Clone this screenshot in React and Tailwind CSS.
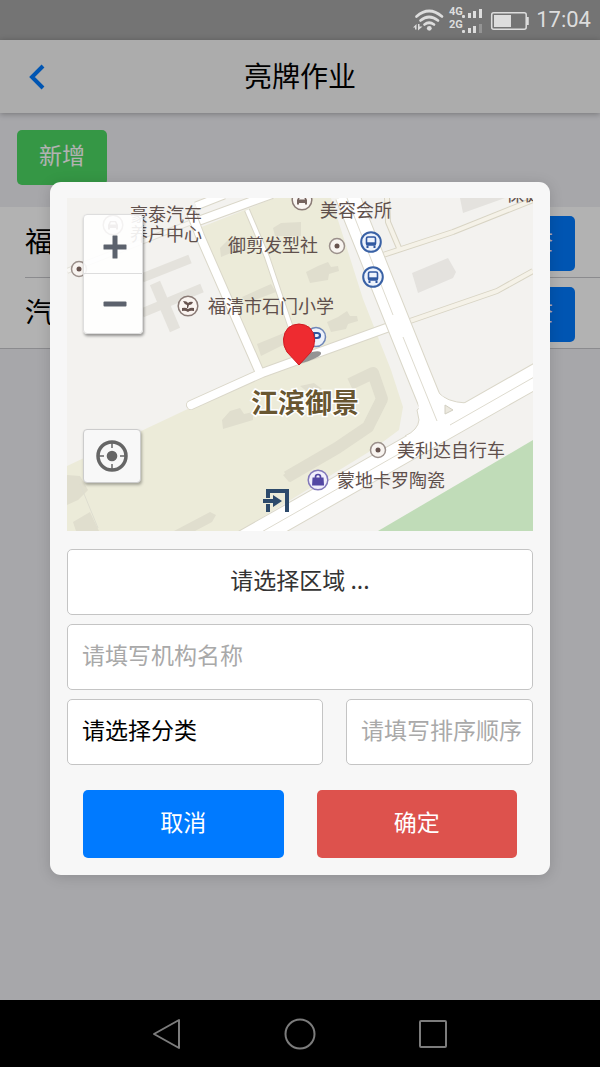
import React from "react";

const rows = ["福清", "汽车"];

function StatusBar() {
  return (
    <div className="flex h-10 items-center justify-end bg-[#747474] pr-[9px] text-[#dddddd]">
      <svg viewBox="412 0 120 40" className="h-10 w-[120px]" fill="none" stroke="#dddddd" aria-hidden="true">
        <path d="M416.500 16.500Q429 5.500 442 16.500M420.500 20.500Q429 13.500 438 20.500M424.500 24.500Q429 21 434 24.500" strokeWidth="2.700" strokeLinecap="round" />
        <circle cx="429.300" cy="28.300" r="2.400" fill="#dddddd" stroke="none" />
        <path d="M413 27.500L416.500 24V29.500H415V27.500ZM418 24H419.500V26.500H422.500L418 30.500Z" fill="#dddddd" stroke="none" />
        <g fill="#dddddd" stroke="none" fontFamily="Roboto, sans-serif" fontSize="11" fontWeight="700">
          <text x="449" y="15">4G</text>
          <text x="449" y="28">2G</text>
          <rect x="462" y="15" width="3" height="3" rx="1" />
          <rect x="468" y="13" width="3" height="5" />
          <rect x="473" y="11" width="3" height="7" />
          <rect x="479" y="9" width="3" height="9" />
          <rect x="462" y="30" width="3" height="3" rx="1" />
          <rect x="468" y="28" width="3" height="5" />
          <rect x="473" y="26" width="3" height="7" />
          <rect x="479" y="24" width="3" height="9" opacity="0.300" />
          <rect x="494" y="15" width="17" height="12" />
        </g>
        <rect x="491.700" y="12.700" width="34.500" height="16.500" rx="2" strokeWidth="1.500" />
        <path d="M527.500 17V25" strokeWidth="2.500" />
      </svg>
      <time className="ml-1 font-[Roboto,sans-serif] text-[22px] leading-10">17:04</time>
    </div>
  );
}

function Dot({ x, y }) {
  return (
    <g>
      <circle cx={x} cy={y} r="7.500" fill="#f8f4f0" stroke="#9b908b" strokeWidth="1.500" />
      <circle cx={x} cy={y} r="2.500" fill="#67534e" />
    </g>
  );
}

function Bus({ x, y }) {
  return (
    <g transform={`translate(${x} ${y})`}>
      <circle r="9.800" fill="#eef3fc" stroke="#3961a5" strokeWidth="2" />
      <rect x="-4.500" y="-5" width="9" height="8" rx="1.500" fill="none" stroke="#2f57a0" strokeWidth="1.600" />
      <path d="M-4 1.600H4" stroke="#2f57a0" strokeWidth="2.600" />
      <path d="M-3.500 3.500V6M3.500 3.500V6" stroke="#2f57a0" strokeWidth="2" />
    </g>
  );
}

function Car({ x, y }) {
  return (
    <g transform={`translate(${x} ${y})`}>
      <circle r="9.800" fill="#faf6f3" stroke="#8a7b76" strokeWidth="1.500" />
      <path d="M-5 4.500V0L-3 -4H3L5 0V4.500H3V3H-3V4.500ZM-3 -0.500H3L2 -2.800H-2Z" fill="#75635e" fillRule="evenodd" />
    </g>
  );
}

function Road({ d, width }) {
  return (
    <>
      <path d={d} stroke="#dad7c9" strokeWidth={width + 2} />
      <path d={d} stroke="#ffffff" strokeWidth={width} />
    </>
  );
}

function MapDrawing() {
  return (
    <svg viewBox="67 198 466 333" className="block h-auto w-full" role="img" aria-label="地图">
      <rect x="67" y="198" width="466" height="333" fill="#f3f2ef" />
      <path d="M199 228L275 198H331L363 299L391 370L403 407L399 430L372 450L240 531H67V466L192 407L262 371Z" fill="#ecebd9" />
      <path d="M378 531L533 440V531Z" fill="#c0dcb8" />

      <g fill="none" stroke="#e4e2dc">
        <path d="M142 278L190 259M142 313L202 288" strokeWidth="9" />
        <path d="M155 283L175 330" strokeWidth="11" />
      </g>
      <path d="M412 273L448 258L456 272L453 278L418 293Z M460 198H505L463 213Z" fill="#e4e2de" />
      <g fill="#e0dece">
        <path d="M257 344L284 333L287 343L261 356Z M242 297L271 284L276 292L247 303Z M220 248L228 240L240 241L238 250L221 257Z M273 228L281 223L301 222V236L275 236Z" />
        <path d="M306 272L318 266L328 262L331 267L338 266L339 271L329 274L328 280L310 283Z" />
        <path d="M327 322L338 317L347 311L350 316L357 316L358 321L348 324L346 329L331 332Z" />
        <path d="M222 420L230 411L240 408L244 414L253 412V420L223 429Z M300 386L314 383L322 389L308 392Z" />
        <path d="M67 475L80 476L88 490L78 500L67 505Z M73 522L90 512L99 531H76Z" />
        <path d="M283 475L301 464L306 472L289 482Z M174 531L210 512L216 515L212 522L195 531Z" />
      </g>
      <path d="M350 384L373 373L382 399L368 427L337 448L287 477" fill="none" stroke="#e0dece" strokeWidth="12" strokeLinejoin="round" />
      <path d="M80 484L98 528" stroke="#deddd0" fill="none" />

      <g fill="none" strokeLinejoin="round">
        <g stroke="#d8d4c4" strokeWidth="6">
          <path d="M383 255L453 232L533 200M410 321L497 291L533 271M387 198L388 222L399 248" />
        </g>
        <g stroke="#f5f2e8" strokeWidth="4">
          <path d="M383 255L453 232L533 200M410 321L497 291L533 271M387 198L388 222L399 248" />
        </g>
        <path d="M67 271L192 222" stroke="#e2e0d8" strokeWidth="6" />
        <path d="M67 271L192 222" stroke="#f8f7f4" strokeWidth="4" />
        <Road d="M196 206L224 195" width={7} />
        <Road d="M190 224L272 194" width={8} />
        <Road d="M247 210L267 257L296 343" width={4} />
        <g strokeLinecap="round">
          <path d="M191 405L262 373L392 326M192 215L200 236L260 373" stroke="#dad7c9" strokeWidth="10" />
          <path d="M191 405L262 373L392 326M192 215L200 236L260 373" stroke="#ffffff" strokeWidth="8" />
        </g>
        <path d="M230 550L418 443L550 368M347 195L417 370L430 402" stroke="#dad7c9" strokeWidth="25" />
        <path d="M417 410L419 420Q418 430 405 436L432 445L466 403Q446 402 438 392Z" fill="#ffffff" stroke="#dad7c9" />
        <path d="M230 550L418 443L550 368M347 195L417 370L430 402" stroke="#ffffff" strokeWidth="23" />
        <path d="M418 400L420 420Q419 431 407 437L432 442L462 404Q444 402 436 390Z" fill="#ffffff" />
        <path d="M392 326L398 323" stroke="#ffffff" strokeWidth="8" />
        <path d="M230 550L418 443M450 425L550 368M347 198L393 315M403 337L437 421" stroke="#dedbcf" />
        <path d="M445 405L453 410L445 414Z" fill="#ece9df" stroke="#d2cfc2" />
      </g>

      <Car x={113} y={225} />
      <Car x={302} y={200} />
      <Dot x={79} y={269} />
      <Dot x={337} y={246} />
      <Dot x={378} y={450} />
      <Bus x={371} y={242} />
      <Bus x={373} y={277} />

      <g transform="translate(188 306)">
        <circle r="9.800" fill="#faf4f0" stroke="#8a7b76" strokeWidth="1.500" />
        <path d="M-5 -5Q-1 -5 0 -3Q2 -5 5 -4Q4 -1 1 -1L0 2H-1L-1 -1Q-4 -2 -5 -5ZM-6 2Q-2 1 0 3Q3 1 6 2V5Q2 4 0 6Q-3 4 -6 5Z" fill="#67534e" />
      </g>
      <g transform="translate(318 480)">
        <circle r="9.800" fill="#f1effc" stroke="#8278ba" strokeWidth="1.500" />
        <path d="M-5.500 -2.500H5.500L6 5.500H-6Z" fill="#5347a3" />
        <path d="M-2.500 -1V-3Q-2.500 -5.500 0 -5.500Q2.500 -5.500 2.500 -3V-1" fill="none" stroke="#5347a3" strokeWidth="1.700" />
      </g>
      <g fill="#2d4a6b">
        <path d="M266 489H289V512H285V493H270V498H266ZM266 504H270V512H266Z" />
        <path d="M263 499H273V495L282 501L273 507V503H263Z" />
      </g>

      <g fill="#5f504c" fontFamily="'Noto Sans CJK SC', sans-serif" fontSize="18">
        <text x="130" y="221">豪泰汽车</text>
        <text x="130" y="241">养户中心</text>
        <text x="320" y="217">美容会所</text>
        <text x="228" y="252">御剪发型社</text>
        <text x="208" y="313">福清市石门小学</text>
        <text x="397" y="457">美利达自行车</text>
        <text x="337" y="487">蒙地卡罗陶瓷</text>
        <text x="506" y="201">保健</text>
        <text x="251" y="413" fontSize="27" fontWeight="700" fill="#685631" stroke="#ffffff" strokeWidth="3" paintOrder="stroke">江滨御景</text>
      </g>

      <circle cx="316" cy="337" r="9.500" fill="#eef2fa" stroke="#6f87b8" strokeWidth="1.500" />
      <path d="M314 342V333H317Q320 333 320 335.500Q320 338 317 338H314" fill="none" stroke="#2f57a0" strokeWidth="2.200" />
      <path d="M299 364Q301 355 312 352Q322 350 321 354Q319 358 299 364Z" fill="#666666" opacity="0.700" />
      <path d="M299 365L287 352Q283 346 283.500 339Q285 324.500 299 324Q313 324.500 314.500 339Q315 346 311 352Z" fill="#ee2b30" stroke="#cf1b22" />
    </svg>
  );
}

function MapView() {
  return (
    <div className="relative">
      <MapDrawing />
      <div className="absolute left-4 top-4 flex w-[60px] flex-col rounded-[4px] border border-[#dedede] bg-white/90 shadow-[1px_2px_3px_rgba(0,0,0,0.4)]">
        <button type="button" aria-label="放大" className="flex h-[59px] items-center justify-center border-b border-[#dddddd] pl-[3px] pt-1.5">
          <svg viewBox="0 0 24 24" className="size-6" fill="#5c626d"><path d="M1 9.500H9.500V1Q9.500 0.500 10 0.500H14Q14.500 0.500 14.500 1V9.500H23Q23.500 9.500 23.500 10V14Q23.500 14.500 23 14.500H14.500V23Q14.500 23.500 14 23.500H10Q9.500 23.500 9.500 23V14.500H1Q0.500 14.500 0.500 14V10Q0.500 9.500 1 9.500Z" /></svg>
        </button>
        <button type="button" aria-label="缩小" className="flex h-[59px] items-center justify-center pl-[3px]">
          <svg viewBox="0 0 24 24" className="size-6" fill="#5c626d"><rect x="0.500" y="9.500" width="23" height="5" rx="1" /></svg>
        </button>
      </div>
      <button type="button" aria-label="定位" className="absolute bottom-12 left-4 flex h-[54px] w-[58px] items-center justify-center rounded-[4px] border border-[#cccccc] bg-[#f8f8f8] shadow-[1px_2px_3px_rgba(0,0,0,0.3)]">
        <svg viewBox="0 0 32 32" className="size-8" fill="none" stroke="#666666">
          <circle cx="16" cy="16" r="14" strokeWidth="3.500" />
          <circle cx="16" cy="16" r="5.300" fill="#666666" stroke="none" />
          <path d="M16 3V8M16 24V29M3 16H8M24 16H29" strokeWidth="1.500" />
        </svg>
      </button>
    </div>
  );
}

function Dialog() {
  return (
    <div className="absolute inset-0 flex items-start justify-center bg-black/30 pt-[142px]">
      <form
        role="dialog"
        aria-label="新增"
        onSubmit={(e) => e.preventDefault()}
        className="w-5/6 rounded-[11px] bg-[#f7f7f7] px-[17px] pb-[17px] pt-4 shadow-[0_2px_14px_rgba(0,0,0,0.15)]"
      >
        <MapView />
        <div className="mt-[18px] flex flex-col gap-[9px] text-[23px]">
          <button type="button" className="h-[66px] rounded-[5px] border border-[#c4c4c4] bg-white pb-1.5 text-[#333333]">
            请选择区域 ...
          </button>
          <input
            type="text"
            aria-label="机构名称"
            placeholder="请填写机构名称"
            className="h-[66px] rounded-[5px] border border-[#c4c4c4] bg-white pb-1.5 pl-[14px] placeholder:text-[#a9a9a9]"
          />
          <div className="grid grid-cols-[256fr_187fr] gap-[23px]">
            <select aria-label="分类" className="h-[66px] min-w-0 appearance-none rounded-[5px] border border-[#c4c4c4] bg-white pb-1.5 pl-[14px] text-black">
              <option>请选择分类</option>
            </select>
            <input
              type="text"
              aria-label="排序顺序"
              placeholder="请填写排序顺序"
              className="h-[66px] min-w-0 rounded-[5px] border border-[#c4c4c4] bg-white pb-1.5 pl-[14px] placeholder:text-[#a9a9a9]"
            />
          </div>
        </div>
        <div className="mt-[25px] grid grid-cols-2 gap-[33px] px-4 text-[23px] text-white">
          <button type="button" className="h-[68px] rounded-[5px] bg-[#007aff] pb-1.5">取消</button>
          <button type="submit" className="h-[68px] rounded-[5px] bg-[#dd524d] pb-1.5">确定</button>
        </div>
      </form>
    </div>
  );
}

function NavBar() {
  const icon = "size-9";
  return (
    <nav className="grid h-[67px] grid-cols-3 items-center justify-items-center bg-black px-[100px]">
      <button type="button" aria-label="返回">
        <svg viewBox="0 0 36 36" className={icon} fill="none" stroke="#7c7c7c" strokeWidth="2" strokeLinejoin="round"><path d="M5 18L30 4V32Z" /></svg>
      </button>
      <button type="button" aria-label="主页">
        <svg viewBox="0 0 36 36" className={icon} fill="none" stroke="#7c7c7c" strokeWidth="2"><circle cx="18" cy="18" r="14.500" /></svg>
      </button>
      <button type="button" aria-label="最近任务">
        <svg viewBox="0 0 36 36" className={icon} fill="none" stroke="#7c7c7c" strokeWidth="2" strokeLinejoin="round"><rect x="5" y="5" width="26" height="26" rx="1" /></svg>
      </button>
    </nav>
  );
}

export default function App() {
  return (
    <div className="flex min-h-screen flex-col font-['Noto_Sans_CJK_SC',sans-serif]">
      <StatusBar />
      <div className="relative flex-1 bg-[#efeff4]">
        <header className="grid h-[73px] grid-cols-[74px_1fr_74px] items-center bg-[#f7f7f7] shadow-[0_1px_6px_rgba(0,0,0,0.3)]">
          <button type="button" aria-label="返回" className="flex h-full items-center justify-center">
            <svg viewBox="0 0 16 26" className="h-[26px] w-4" fill="none" stroke="#007aff" strokeWidth="4"><path d="M14 2L3 13L14 24" /></svg>
          </button>
          <h1 className="pb-1 text-center text-[28px] leading-10">亮牌作业</h1>
        </header>
        <div className="px-[17px] pb-[22px] pt-[17px]">
          <button type="button" className="h-[55px] w-[90px] rounded-[5px] bg-[#4cd964] pb-1.5 text-[23px] text-white">新增</button>
        </div>
        <ul className="bg-white">
          {rows.map((name, i) => (
            <li key={name} className={i === rows.length - 1 ? "border-b border-[#c8c7cc] pl-[25px]" : "pl-[25px]"}>
              <div className={`flex items-center justify-between pb-[6px] pr-[25px] pt-[9px] ${i < rows.length - 1 ? "border-b border-[#c8c7cc]" : ""}`}>
                <span className="pb-2 text-[28px] leading-10">{name}</span>
                <button type="button" className="h-[55px] rounded-[5px] bg-[#007aff] px-[22px] pb-1.5 text-[23px] text-white">检查</button>
              </div>
            </li>
          ))}
        </ul>
        <Dialog />
      </div>
      <NavBar />
    </div>
  );
}
